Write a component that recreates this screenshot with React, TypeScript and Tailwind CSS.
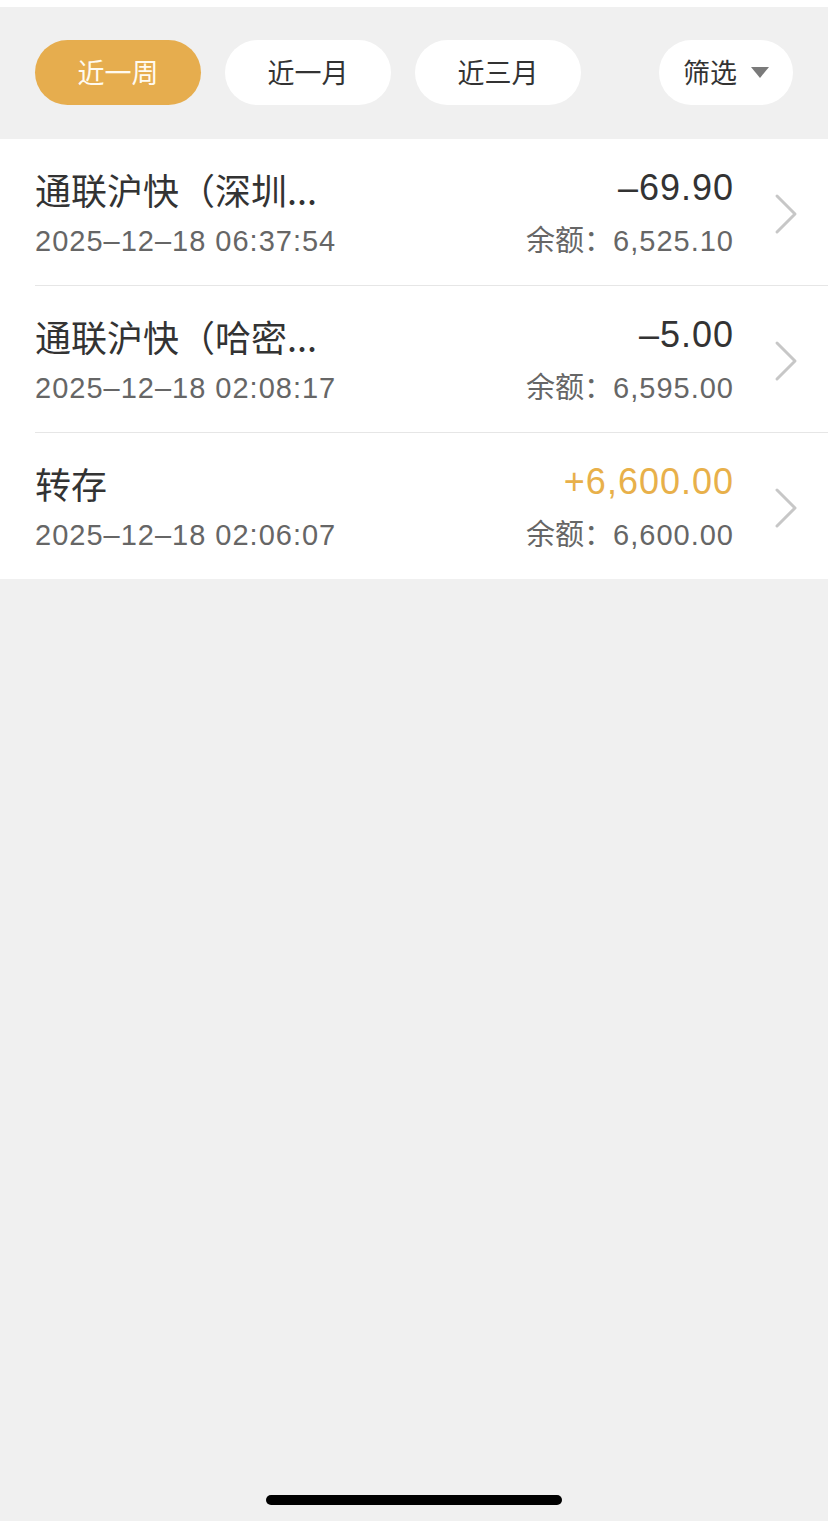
import React from "react";

const font = { fontFamily: '"Liberation Sans", "Noto Sans CJK SC", sans-serif' };
const cjk = { fontFamily: '"Noto Sans CJK SC", sans-serif' };

interface Record {
  title: string;
  time: string;
  amount: string;
  balance: string;
  income?: boolean;
}

const records: Record[] = [
  { title: "通联沪快（深圳...", time: "2025–12–18 06:37:54", amount: "–69.90", balance: "6,525.10" },
  { title: "通联沪快（哈密...", time: "2025–12–18 02:08:17", amount: "–5.00", balance: "6,595.00" },
  { title: "转存", time: "2025–12–18 02:06:07", amount: "+6,600.00", balance: "6,600.00", income: true },
];

function Chevron() {
  return (
    <svg width="26" height="42" viewBox="0 0 26 42" fill="none">
      <path d="M4 3 L22 21 L4 39" stroke="#c7c7c7" strokeWidth="3" strokeLinecap="round" strokeLinejoin="round" />
    </svg>
  );
}

export default function App() {
  const tabs = ["近一周", "近一月", "近三月"];
  return (
    <div className="w-[828px] h-[1521px] bg-[#f0f0f0] flex flex-col" style={font}>
      <div className="h-[7px] bg-white"></div>
      <div className="flex items-center px-[35px] pt-[33px] pb-[34px]" style={cjk}>
        <div className="flex gap-[24px]">
          {tabs.map((t, i) => (
            <div
              key={t}
              className={
                i === 0
                  ? "w-[166px] h-[65px] rounded-full bg-[#e6ad4e] text-[#fffaf0] text-[27px] flex items-center justify-center"
                  : "w-[166px] h-[65px] rounded-full bg-white text-[#333333] text-[27px] flex items-center justify-center"
              }
            >
              {t}
            </div>
          ))}
        </div>
        <div className="ml-auto w-[134px] h-[65px] rounded-full bg-white text-[#333333] text-[27px] flex items-center justify-center gap-[14px]">
          <span>筛选</span>
          <svg width="18" height="11" viewBox="0 0 18 11">
            <path d="M0 0 L18 0 L9 11 Z" fill="#7a7a7a" />
          </svg>
        </div>
      </div>

      <div className="bg-white">
        {records.map((r, i) => (
          <div key={i} className="pl-[35px]">
            <div
              className={
                i < records.length - 1
                  ? "flex items-center h-[147px] pt-[3px] border-b border-[#e6e6e6]"
                  : "flex items-center h-[146px] pt-[3px]"
              }
            >
              <div className="flex-1 flex flex-col gap-[14px]">
                <div className="text-[36px] leading-[40px] text-[#333333]" style={cjk}>{r.title}</div>
                <div className="text-[29px] leading-[36px] tracking-[1px] text-[#666666]">{r.time}</div>
              </div>
              <div className="flex flex-col items-end gap-[12px]">
                <div
                  className={
                    r.income
                      ? "text-[36px] leading-[40px] tracking-[1px] text-[#e8b04a]"
                      : "text-[36px] leading-[40px] tracking-[1px] text-[#333333]"
                  }
                >
                  {r.amount}
                </div>
                <div className="text-[29px] leading-[36px] text-[#666666]">
                  <span style={cjk}>余额：</span>
                  <span className="tracking-[1px]">{r.balance}</span>
                </div>
              </div>
              <div className="w-[94px] flex justify-center pl-[10px]">
                <Chevron />
              </div>
            </div>
          </div>
        ))}
      </div>

      <div className="flex-1"></div>
      <div className="flex justify-center pb-[16px]">
        <div className="w-[296px] h-[10px] rounded-full bg-black"></div>
      </div>
    </div>
  );
}
